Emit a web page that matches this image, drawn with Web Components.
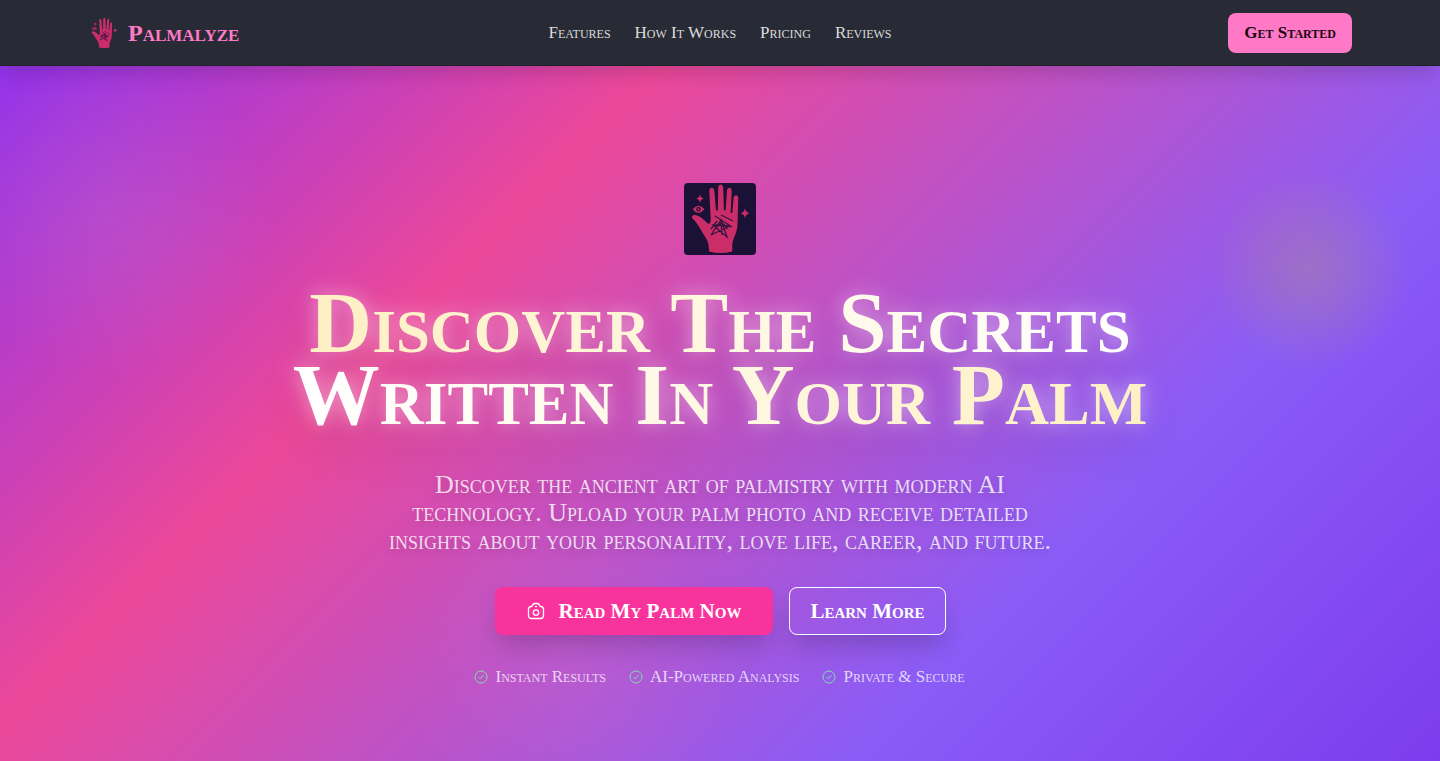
<!DOCTYPE html>
<html lang="en">
<head>
<meta charset="utf-8">
<title>Palmalyze</title>
<style>
    body {
        margin: 0;
        font-family: "Liberation Serif", "Times New Roman", serif;
        font-variant: small-caps;
        background: #282a36;
        color: #f8f8f2;
    }
</style>
</head>
<body>
<palm-app></palm-app>

<script>
class PalmLogo extends HTMLElement {
    constructor() {
        super();
        this.attachShadow({mode: 'open'});
        this.shadowRoot.innerHTML = `
            <style>
                :host {
                    display: block;
                    width: var(--logo-size, 32px);
                    height: var(--logo-size, 32px);
                    border-radius: 4px;
                    overflow: hidden;
                    background: var(--logo-bg, transparent);
                    flex: none;
                }

                svg {
                    display: block;
                    width: 100%;
                    height: 100%;
                }
            </style>
            <svg viewBox="0 0 72 72" aria-hidden="true">
                <g fill="#cb2d68">
                    <path d="M25 68.500C25 62 24 58 21 53.500C17 48 14.500 41 8.500 35.500C7 33.500 9 31.500 12 32.200C17 33.200 20 37 24 40.500C26 41.500 27 39 26.600 34L25.300 8C25.300 3.500 30 3.500 30.400 8L32 27.500H33.800L34.200 4.500C34.500 .500 39 .500 39.200 4.500L40 27.500H41.600L43 7.500C43.500 3.500 48 4 47.700 8L46.700 30H48.300L49.600 15C50 11 54.500 11.500 54.300 15.500L53.500 42C53.300 50 48.500 55 48.300 62V68.500Q36.500 71.500 25 68.500Z"/>
                    <path d="M16 11Q16.500 15 20 15.500Q16.500 16 16 20Q15.500 16 12 15.500Q15.500 15 16 11Z"/>
                    <path d="M61 25Q61.500 29.500 65.500 30.200Q61.500 31 61 35.500Q60.500 31 56.500 30.200Q60.500 29.500 61 25Z"/>
                    <path fill-rule="evenodd" d="M8.500 26.300Q14.500 19 20.500 26.300Q14.500 33.500 8.500 26.300ZM14.500 24A2.300 2.300 0 1 0 14.500 28.600A2.300 2.300 0 1 0 14.500 24Z"/>
                    <circle cx="14.500" cy="26.300" r="1"/>
                </g>
                <g fill="none" stroke="#3a1440" stroke-width="1.300">
                    <path d="M27 52L37 37L43 54L29 42L46 43L27 52M37 37L38 52M31 33L48 44M37 32L49 38M27 46L33 38M33 44Q38 36 43 46"/>
                </g>
            </svg>
        `;
    }
}

customElements.define('palm-logo', PalmLogo);

class PalmHeader extends HTMLElement {
    constructor() {
        super();
        this.attachShadow({mode: 'open'});
        this.shadowRoot.innerHTML = `
            <style>
                :host {
                    display: block;
                    position: relative;
                    z-index: 10;
                    background: #282a36;
                    border-bottom: 1px solid #20222c;
                    box-shadow: 0 10px 20px -4px rgba(0,0,0,0.16);
                }

                header {
                    display: grid;
                    grid-template-columns: 1fr auto 1fr;
                    align-items: center;
                    max-width: 1264px;
                    margin: 0 auto;
                    height: 65px;
                }

                .brand {
                    display: flex;
                    align-items: center;
                    gap: 8px;
                    color: #ff79c6;
                    font-size: 24px;
                    font-weight: bold;
                    line-height: 28px;
                    text-decoration: none;
                }

                nav {
                    display: flex;
                    gap: 24px;
                }

                nav ::slotted(a) {
                    color: #dcdcd9;
                    font-size: 17px;
                    line-height: 20px;
                    text-decoration: none;
                }

                button {
                    justify-self: end;
                    height: 40px;
                    padding: 0 16px;
                    border: 0;
                    border-radius: 8px;
                    background: #ff79c6;
                    color: #1a0612;
                    font: inherit;
                    font-size: 17px;
                    font-weight: bold;
                }
            </style>
            <header>
                <a class="brand" href="#"><palm-logo></palm-logo><span>Palmalyze</span></a>
                <nav><slot></slot></nav>
                <button type="button">Get Started</button>
            </header>
        `;
    }
}

customElements.define('palm-header', PalmHeader);

class PalmButton extends HTMLElement {
    constructor() {
        super();
        this.attachShadow({mode: 'open'});
        this.shadowRoot.innerHTML = `
            <style>
                :host {
                    display: block;
                }

                button {
                    display: flex;
                    align-items: center;
                    gap: 14px;
                    height: 48px;
                    padding: 0 20px;
                    border: 1px solid #fff;
                    border-radius: 8px;
                    background: transparent;
                    color: #fff;
                    font: inherit;
                    font-size: 21px;
                    font-weight: bold;
                    box-shadow: 0 14px 24px -4px rgba(0,0,0,0.18);
                }

                :host([primary]) button {
                    padding: 0 32px;
                    border: 0;
                    background: #f9339c;
                }
            </style>
            <button type="button"><slot name="icon"></slot><slot></slot></button>
        `;
    }
}

customElements.define('palm-button', PalmButton);

class PalmPerk extends HTMLElement {
    constructor() {
        super();
        this.attachShadow({mode: 'open'});
        this.shadowRoot.innerHTML = `
            <style>
                :host {
                    display: flex;
                    align-items: center;
                    gap: 8px;
                    font-size: 17px;
                    line-height: 20px;
                }

                svg {
                    width: 12px;
                    height: 12px;
                    overflow: visible;
                }
            </style>
            <svg viewBox="0 0 12 12" fill="none" stroke="#7ee0a8" aria-hidden="true">
                <circle cx="6" cy="6" r="6"/>
                <path d="M3.600 6.200L5.200 7.800L8.600 4"/>
            </svg>
            <span><slot></slot></span>
        `;
    }
}

customElements.define('palm-perk', PalmPerk);

class PalmHero extends HTMLElement {
    constructor() {
        super();
        this.attachShadow({mode: 'open'});
        this.shadowRoot.innerHTML = `
            <style>
                :host {
                    display: block;
                    position: relative;
                    overflow: hidden;
                    box-sizing: border-box;
                    min-height: calc(100vh - 66px);
                    padding: 117px 16px 64px;
                    background: linear-gradient(135deg, #9333ea 0%, #ec4899 31%, #8b5cf6 72%, #7c3aed 102%);
                }

                .glow {
                    position: absolute;
                    border-radius: 50%;
                    background: radial-gradient(closest-side, var(--tint), var(--tint-mid) 45%, transparent);
                }

                .glow.left {
                    left: -50px;
                    top: -10px;
                    width: 320px;
                    height: 320px;
                    --tint: rgba(190,140,210,0.18);
                    --tint-mid: rgba(190,140,210,0.11);
                }

                .glow.right {
                    right: 30px;
                    top: 104px;
                    width: 200px;
                    height: 200px;
                    --tint: rgba(190,150,110,0.34);
                    --tint-mid: rgba(190,150,110,0.2);
                }

                .glow.bottom {
                    left: 28%;
                    bottom: -80px;
                    width: 340px;
                    height: 340px;
                    --tint: rgba(220,130,200,0.14);
                    --tint-mid: rgba(220,130,200,0.08);
                }

                .content {
                    position: relative;
                    display: flex;
                    flex-direction: column;
                    align-items: center;
                    text-align: center;
                }

                palm-logo {
                    --logo-size: 72px;
                    --logo-bg: #1b1035;
                }

                h1 {
                    max-width: 896px;
                    margin: 32px 0 40px;
                    font-size: 87px;
                    line-height: 72px;
                    filter: drop-shadow(0 0 10px rgba(255,255,255,0.5)) drop-shadow(0 24px 20px rgba(0,0,0,0.1));
                }

                h1 span {
                    background: linear-gradient(to right, #fef0c3, #fff, #fef0c3);
                    -webkit-background-clip: text;
                    background-clip: text;
                    color: transparent;
                }

                p {
                    max-width: 688px;
                    margin: 0 0 32px;
                    color: rgba(255,255,255,0.8);
                    font-size: 26px;
                    line-height: 28px;
                    text-shadow: 0 4px 8px rgba(0,0,0,0.15);
                }

                .actions {
                    display: flex;
                    flex-wrap: wrap;
                    justify-content: center;
                    gap: 16px;
                    margin-bottom: 32px;
                }

                .perks {
                    display: flex;
                    flex-wrap: wrap;
                    justify-content: center;
                    gap: 24px;
                    color: rgba(255,255,255,0.75);
                }
            </style>
            <div class="glow left"></div>
            <div class="glow right"></div>
            <div class="glow bottom"></div>
            <div class="content">
                <palm-logo></palm-logo>
                <h1><span><slot name="title"></slot></span></h1>
                <p><slot></slot></p>
                <div class="actions"><slot name="action"></slot></div>
                <div class="perks"><slot name="perk"></slot></div>
            </div>
        `;
    }
}

customElements.define('palm-hero', PalmHero);

class PalmApp extends HTMLElement {
    constructor() {
        super();
        this.attachShadow({mode: 'open'});
        this.shadowRoot.innerHTML = `
            <style>
                :host {
                    display: block;
                }

                .camera {
                    width: 18px;
                    height: 18px;
                }
            </style>
            <palm-header>
                <a href="#features">Features</a>
                <a href="#how">How It Works</a>
                <a href="#pricing">Pricing</a>
                <a href="#reviews">Reviews</a>
            </palm-header>
            <main>
                <palm-hero>
                    <span slot="title">Discover The Secrets Written In Your Palm</span>
                    Discover the ancient art of palmistry with modern AI technology. Upload your palm photo and receive detailed insights about your personality, love life, career, and future.
                    <palm-button slot="action" primary>
                        <svg slot="icon" class="camera" viewBox="0 0 18 18" fill="none" stroke="#fff" stroke-width="1.300" aria-hidden="true">
                            <path d="M4.500 4.500C5.500 4.500 5.500 1.500 7.500 1.500H10.500C12.500 1.500 12.500 4.500 13.500 4.500C15.500 4.500 16.500 5.500 16.500 7.500V13.500C16.500 15.500 15.500 16.500 13.500 16.500H4.500C2.500 16.500 1.500 15.500 1.500 13.500V7.500C1.500 5.500 2.500 4.500 4.500 4.500ZM8 4.500H10"/>
                            <circle cx="9" cy="10.500" r="2.700"/>
                        </svg>
                        Read My Palm Now
                    </palm-button>
                    <palm-button slot="action">Learn More</palm-button>
                    <palm-perk slot="perk">Instant Results</palm-perk>
                    <palm-perk slot="perk">AI-Powered Analysis</palm-perk>
                    <palm-perk slot="perk">Private &amp; Secure</palm-perk>
                </palm-hero>
            </main>
        `;
    }
}

customElements.define('palm-app', PalmApp);
</script>
</body>
</html>
